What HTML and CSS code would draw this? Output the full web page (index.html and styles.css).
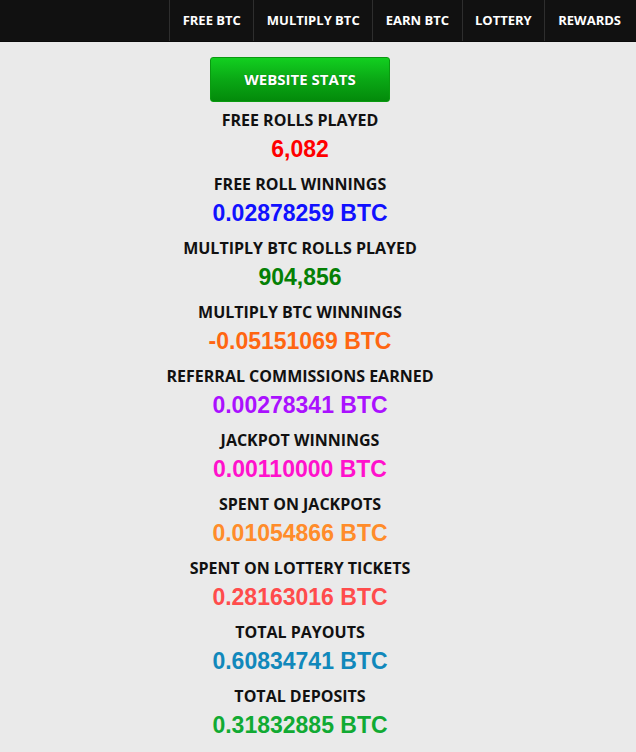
FILE: index.html
```html
<!DOCTYPE html>
<html>
<head>
<meta charset="utf-8">
<link rel="stylesheet" href="styles.css">
</head>
<body>
<nav class="topbar">
  <ul class="menu">
    <li class="menu-item">FREE BTC</li>
    <li class="menu-item">MULTIPLY BTC</li>
    <li class="menu-item">EARN BTC</li>
    <li class="menu-item">LOTTERY</li>
    <li class="menu-item last">REWARDS</li>
  </ul>
</nav>
<main class="stats">
  <div class="stats-button">WEBSITE STATS</div>
  <div class="stat"><div class="label">FREE ROLLS PLAYED</div><div class="value c-red">6,082</div></div>
  <div class="stat"><div class="label">FREE ROLL WINNINGS</div><div class="value c-blue">0.02878259 BTC</div></div>
  <div class="stat"><div class="label">MULTIPLY BTC ROLLS PLAYED</div><div class="value c-green">904,856</div></div>
  <div class="stat"><div class="label">MULTIPLY BTC WINNINGS</div><div class="value c-orange">-0.05151069 BTC</div></div>
  <div class="stat"><div class="label">REFERRAL COMMISSIONS EARNED</div><div class="value c-purple">0.00278341 BTC</div></div>
  <div class="stat"><div class="label">JACKPOT WINNINGS</div><div class="value c-magenta">0.00110000 BTC</div></div>
  <div class="stat"><div class="label">SPENT ON JACKPOTS</div><div class="value c-lorange">0.01054866 BTC</div></div>
  <div class="stat"><div class="label">SPENT ON LOTTERY TICKETS</div><div class="value c-salmon">0.28163016 BTC</div></div>
  <div class="stat"><div class="label">TOTAL PAYOUTS</div><div class="value c-teal">0.60834741 BTC</div></div>
  <div class="stat"><div class="label">TOTAL DEPOSITS</div><div class="value c-lgreen">0.31832885 BTC</div></div>
</main>
</body>
</html>
```
FILE: styles.css
```css
html, body {
  margin: 0;
  padding: 0;
}
body {
  background: #eaeaea;
  font-family: "Open Sans", "Liberation Sans", sans-serif;
  width: 636px;
  height: 752px;
  overflow: hidden;
}
.topbar {
  background: #111111;
  height: 41px;
  border-bottom: 1px solid #0a0a0a;
  display: flex;
  justify-content: flex-end;
}
.menu {
  list-style: none;
  margin: 0;
  padding: 0;
  display: flex;
}
.menu-item {
  color: #fff;
  font-weight: 700;
  font-size: 13px;
  line-height: 41px;
  padding: 0 12.5px;
  border-left: 1px solid #2e2e2e;
}
.menu-item.last {
  padding-left: 13px;
  padding-right: 15px;
}
.stats {
  width: 600px;
  display: flex;
  flex-direction: column;
  align-items: center;
  padding-top: 15px;
}
.stats-button {
  width: 178px;
  height: 43px;
  border: 1px solid #0a9a10;
  border-radius: 3px;
  background: linear-gradient(to bottom, #12cf20 0%, #0aa815 50%, #038a0a 100%);
  color: #fff;
  font-weight: 700;
  font-size: 15px;
  line-height: 43px;
  text-align: center;
  text-shadow: 0 0 1px rgba(0,0,0,0.4);
  margin-bottom: 7px;
}
.stat {
  display: flex;
  flex-direction: column;
  align-items: center;
  height: 64px;
}
.label {
  color: #111;
  font-weight: 700;
  font-size: 16px;
  line-height: 22px;
}
.value {
  font-family: "Liberation Sans", Arial, sans-serif;
  font-weight: 700;
  font-size: 23px;
  line-height: 36px;
}
.c-red { color: #ff0000; }
.c-blue { color: #1111ff; }
.c-green { color: #058005; }
.c-orange { color: #ff6611; }
.c-purple { color: #aa11ff; }
.c-magenta { color: #ff11cc; }
.c-lorange { color: #ff8c2a; }
.c-salmon { color: #ff4c4c; }
.c-teal { color: #1188bb; }
.c-lgreen { color: #11aa33; }
```
